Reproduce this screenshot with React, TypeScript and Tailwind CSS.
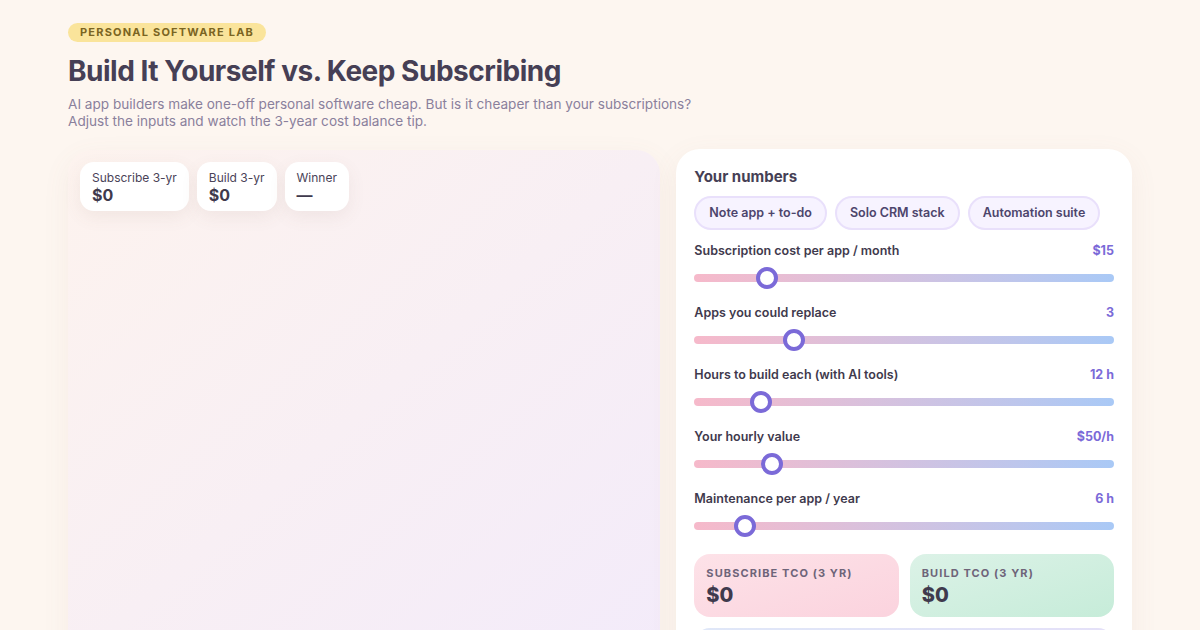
import React from "react";

type Slider = { label: string; value: string; frac: number };

const sliders: Slider[] = [
  { label: "Subscription cost per app / month", value: "$15", frac: 0.156 },
  { label: "Apps you could replace", value: "3", frac: 0.224 },
  { label: "Hours to build each (with AI tools)", value: "12 h", frac: 0.141 },
  { label: "Your hourly value", value: "$50/h", frac: 0.168 },
  { label: "Maintenance per app / year", value: "6 h", frac: 0.1 },
];

const presets = ["Note app + to-do", "Solo CRM stack", "Automation suite"];

function Stat({ label, value }: { label: string; value: string }) {
  return (
    <div className="rounded-[14px] bg-white px-3 pt-[8px] pb-[7px] shadow-[0_6px_18px_rgba(120,90,80,0.08)]">
      <div className="text-[12px] leading-[16px] text-[#4a4358]">{label}</div>
      <div className="text-[16px] font-bold leading-[18px] text-[#3f3a4d]">{value}</div>
    </div>
  );
}

function RangeRow({ s }: { s: Slider }) {
  return (
    <div className="flex flex-col">
      <div className="flex items-center justify-between text-[12.5px] font-semibold leading-[16px]">
        <span className="text-[#3f3a4d]">{s.label}</span>
        <span className="font-bold text-[#7b6ad8]">{s.value}</span>
      </div>
      <div className="relative mt-[8px] h-[22px]">
        <div className="absolute left-0 right-0 top-[7px] h-[8px] rounded-full bg-gradient-to-r from-[#f6b9ca] to-[#a9c9f6]" />
        <div
          className="absolute top-0 h-[22px] w-[22px] rounded-full border-[4px] border-[#7b6ad8] bg-white"
          style={{ left: `calc(${s.frac} * (100% - 22px))` }}
        />
      </div>
    </div>
  );
}

export default function App() {
  return (
    <div
      className="min-h-[630px] bg-[#fdf6f0] px-[68px] pt-[23px] text-[#3f3a4d]"
      style={{ fontFamily: "Inter, 'Noto Sans', sans-serif" }}
    >
      <div className="w-fit rounded-full bg-[#fae49b] px-[12px] py-[3px] text-[11px] font-bold leading-[13px] tracking-[0.11em] text-[#7a6422]">
        PERSONAL SOFTWARE LAB
      </div>
      <h1 className="mt-[13px] text-[28px] font-bold leading-[32px] tracking-[-0.017em] text-[#463f55]">
        Build It Yourself vs. Keep Subscribing
      </h1>
      <p className="mt-[9px] text-[13.6px] leading-[17px] text-[#8a809c]">
        AI app builders make one-off personal software cheap. But is it cheaper than your subscriptions?
        <br />
        Adjust the inputs and watch the 3-year cost balance tip.
      </p>

      <div className="mt-[20px] grid grid-cols-[1.3fr_1fr] gap-4">
        <div className="h-[520px] rounded-[24px] bg-gradient-to-br from-[#fdf3ee] to-[#f3ebfa] p-3 shadow-[0_8px_28px_rgba(150,110,100,0.07)]">
          <div className="flex gap-2">
            <Stat label="Subscribe 3-yr" value="$0" />
            <Stat label="Build 3-yr" value="$0" />
            <Stat label="Winner" value="—" />
          </div>
        </div>

        <div className="-mt-px h-[520px] rounded-[24px] bg-white px-[18px] pt-[18px] shadow-[0_8px_28px_rgba(150,110,100,0.08)]">
          <h2 className="text-[15px] font-bold leading-[20px] text-[#463f55]">Your numbers</h2>
          <div className="mt-[9px] flex gap-2">
            {presets.map((p) => (
              <span
                key={p}
                className="rounded-full border-2 border-[#e9e0fb] bg-[#f7f3ff] px-[13px] py-[6px] text-[12.5px] font-semibold leading-[18px] text-[#4d456c]"
              >
                {p}
              </span>
            ))}
          </div>
          <div className="mt-[13px] flex flex-col gap-[16px]">
            {sliders.map((s) => (
              <RangeRow key={s.label} s={s} />
            ))}
          </div>
          <div className="mt-[17px] grid grid-cols-2 gap-[11px]">
            <div className="rounded-[16px] bg-gradient-to-br from-[#fde2e8] to-[#fbd3de] px-[12px] pt-[12px] pb-[10px]">
              <div className="text-[11px] font-bold leading-[14px] tracking-[0.1em] text-[#6e6479]">SUBSCRIBE TCO (3 YR)</div>
              <div className="mt-[3px] text-[20px] font-extrabold leading-[24px] text-[#3f3a4d]">$0</div>
            </div>
            <div className="rounded-[16px] bg-gradient-to-br from-[#dcf2e7] to-[#c6ecd9] px-[12px] pt-[12px] pb-[10px]">
              <div className="text-[11px] font-bold leading-[14px] tracking-[0.1em] text-[#6e6479]">BUILD TCO (3 YR)</div>
              <div className="mt-[3px] text-[20px] font-extrabold leading-[24px] text-[#3f3a4d]">$0</div>
            </div>
          </div>
          <div className="mt-[11px] h-[60px] rounded-[16px] bg-gradient-to-r from-[#dfe7f8] to-[#e4e0f8]" />
        </div>
      </div>
    </div>
  );
}
